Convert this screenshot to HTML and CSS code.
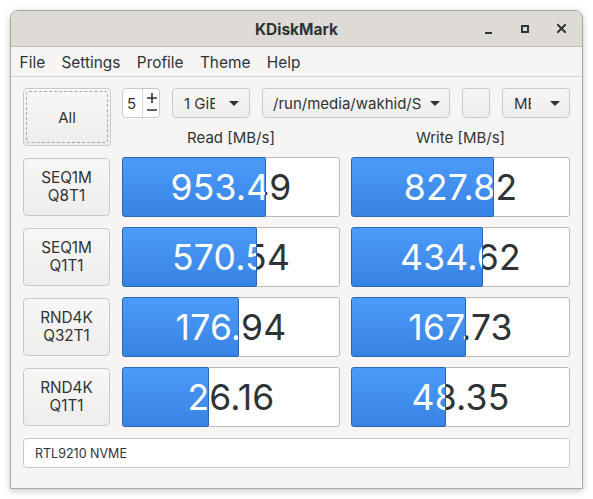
FILE: index.html
```
<!DOCTYPE html>
<html>
<head>
<meta charset="utf-8">
<link rel="stylesheet" href="styles.css">
</head>
<body>
<div class="window">
  <div class="titlebar">
    <span class="title">KDiskMark</span>
    <div class="wbtns">
      <svg class="wbtn" width="36" height="36" viewBox="0 0 36 36"><rect x="13" y="21" width="7" height="2" fill="#2e3436"/></svg>
      <svg class="wbtn" width="36" height="36" viewBox="0 0 36 36"><rect x="14" y="15" width="6" height="6" fill="none" stroke="#2e3436" stroke-width="2"/></svg>
      <svg class="wbtn" width="36" height="36" viewBox="0 0 36 36"><path d="M14 14 L21 21 M21 14 L14 21" stroke="#2e3436" stroke-width="2" stroke-linecap="square"/></svg>
    </div>
  </div>
  <div class="menubar">
    <span class="menu">File</span>
    <span class="menu">Settings</span>
    <span class="menu">Profile</span>
    <span class="menu">Theme</span>
    <span class="menu">Help</span>
  </div>
  <div class="content">
    <div class="top">
      <div class="btn allbtn"><span class="focus">All</span></div>
      <div class="right">
        <div class="controls">
          <div class="field spin"><span class="spinval">5</span><span class="spinbtns"><svg width="14" height="26" viewBox="0 0 14 26"><path d="M2 8 H12 M7 3 V13" stroke="#2e3436" stroke-width="1.6"/><path d="M2 20 H12" stroke="#2e3436" stroke-width="1.6"/></svg></span></div>
          <div class="btn combo c-size"><span class="ctext">1 GiB</span><span class="arrow"></span></div>
          <div class="btn combo c-path"><span class="ctext">/run/media/wakhid/SSD</span><span class="arrow"></span></div>
          <div class="btn c-empty"></div>
          <div class="btn combo c-unit"><span class="ctext">MB/s</span><span class="arrow"></span></div>
        </div>
        <div class="headers">
          <span class="hdr">Read [MB/s]</span>
          <span class="hdr">Write [MB/s]</span>
        </div>
      </div>
    </div>
    <div class="rows">
      <div class="btn label">SEQ1M<br>Q8T1</div>
      <div class="bar"><span class="num">953.49</span><div class="fill" style="width:144px"><span class="num wnum">953.49</span></div></div>
      <div class="bar"><span class="num">827.82</span><div class="fill" style="width:143px"><span class="num wnum">827.82</span></div></div>

      <div class="btn label">SEQ1M<br>Q1T1</div>
      <div class="bar"><span class="num">570.54</span><div class="fill" style="width:135px"><span class="num wnum">570.54</span></div></div>
      <div class="bar"><span class="num">434.62</span><div class="fill" style="width:132px"><span class="num wnum">434.62</span></div></div>

      <div class="btn label">RND4K<br>Q32T1</div>
      <div class="bar"><span class="num">176.94</span><div class="fill" style="width:117px"><span class="num wnum">176.94</span></div></div>
      <div class="bar"><span class="num">167.73</span><div class="fill" style="width:115px"><span class="num wnum">167.73</span></div></div>

      <div class="btn label">RND4K<br>Q1T1</div>
      <div class="bar"><span class="num">26.16</span><div class="fill" style="width:87px"><span class="num wnum">26.16</span></div></div>
      <div class="bar"><span class="num">48.35</span><div class="fill" style="width:95px"><span class="num wnum">48.35</span></div></div>
    </div>
    <div class="field footer">RTL9210 NVME</div>
  </div>
</div>
</body>
</html>
```
FILE: styles.css
```
* { box-sizing: border-box; }
html, body { margin: 0; padding: 0; background: #ffffff; }
body {
  font-family: Inter, "Noto Sans", "DejaVu Sans", sans-serif;
  color: #2e3436;
  width: 593px;
  height: 499px;
  overflow: hidden;
}
.window {
  margin: 10px 0 0 10px;
  width: 573px;
  height: 479px;
  border: 1px solid #a9a6a3;
  border-radius: 8px 8px 0 0;
  background: #f6f5f4;
  box-shadow: 0 2px 7px rgba(0,0,0,0.22);
  overflow: hidden;
}
.titlebar {
  height: 36px;
  background: #dedbd7;
  border-bottom: 1px solid #c3bfbb;
  display: flex;
  align-items: center;
  justify-content: center;
  position: relative;
}
.title {
  font-weight: 700;
  font-size: 15.5px;
  color: #2e3436;
  margin-top: 1px;
}
.wbtns {
  position: absolute;
  right: 2px;
  top: 0;
  display: flex;
}
.wbtn { display: block; }
.menubar {
  height: 30px;
  border-bottom: 1px solid #d5d1cd;
  display: flex;
  align-items: center;
  padding-left: 0;
  padding-top: 2px;
}
.menu {
  font-size: 15.4px;
  padding: 0 8.2px;
}
.menu:first-child { padding-left: 8.6px; }
.content {
  padding: 11px 12px 0 12px;
}
.btn {
  background: linear-gradient(#f8f7f6, #efedec);
  border: 1px solid #cdc8c3;
  border-radius: 4px;
}
.field {
  background: #ffffff;
  border: 1px solid #cdc8c3;
  border-radius: 4px;
}
.top {
  display: flex;
  gap: 11px;
}
.allbtn {
  width: 88px;
  height: 58px;
  padding: 2px;
  flex: none;
}
.focus {
  display: flex;
  align-items: center;
  justify-content: center;
  width: 100%;
  height: 100%;
  border: 1px dashed #a9a6a3;
  border-radius: 3px;
  font-size: 15px;
}
.right { flex: 1; display: flex; flex-direction: column; }
.controls {
  display: flex;
  gap: 12px;
  height: 30px;
}
.spin {
  width: 38px;
  display: flex;
  align-items: center;
}
.spinval { font-size: 15px; width: 19px; padding-left: 4px; }
.spinbtns {
  border-left: 1px solid #dcd8d4;
  height: 100%;
  display: flex;
  align-items: center;
  padding-left: 2px;
}
.spinbtns svg { display: block; }
.combo {
  display: flex;
  align-items: center;
  font-size: 15px;
}
.ctext { overflow: hidden; white-space: nowrap; display: block; }
.arrow {
  width: 0; height: 0;
  border-left: 5px solid transparent;
  border-right: 5px solid transparent;
  border-top: 5px solid #2e3436;
  margin-left: auto;
}
.c-size { width: 78px; padding: 0 10px 0 11px; }
.c-size .ctext { width: 31px; }
.c-path { width: 188px; padding: 0 9px 0 10px; }
.c-path .ctext { width: 148px; }
.c-empty { width: 28px; }
.c-unit { width: 68px; padding: 0 9px 0 11px; }
.c-unit .ctext { width: 17px; }
.headers {
  display: grid;
  grid-template-columns: 218px 219px;
  column-gap: 11px;
  height: 28px;
  align-items: end;
}
.hdr {
  text-align: center;
  font-size: 15px;
  padding-bottom: 0;
  line-height: 18px;
  margin-bottom: -1px;
}
.rows {
  margin-top: 11px;
  display: grid;
  grid-template-columns: 88px 218px 219px;
  column-gap: 11px;
  row-gap: 10px;
  grid-auto-rows: 60px;
}
.label {
  width: 87px;
  margin: 1px 0;
  display: flex;
  align-items: center;
  justify-content: center;
  text-align: center;
  font-size: 15.3px;
  line-height: 18px;
}
.bar {
  position: relative;
  background: #ffffff;
  border: 1px solid #bdb9b5;
  border-radius: 3px;
  display: flex;
  align-items: center;
  justify-content: center;
}
.num {
  font-size: 35.5px;
  color: #2e3436;
  white-space: nowrap;
  letter-spacing: 0.2px;
}
.fill {
  position: absolute;
  left: -1px;
  top: -1px;
  bottom: -1px;
  overflow: hidden;
  background: linear-gradient(#4c9bf9, #3783e3);
  border: 1px solid #2a66b8;
  border-radius: 3px 2px 2px 3px;
}
.wnum {
  position: absolute;
  left: -1px;
  top: -1px;
  width: 218px;
  height: 60px;
  display: flex;
  align-items: center;
  justify-content: center;
  color: #ffffff;
}
.rows .bar:nth-child(3n) .wnum { width: 219px; }
.footer {
  margin-top: 11px;
  height: 30px;
  display: flex;
  align-items: center;
  padding-left: 11px;
  font-size: 12.5px;
}
```
